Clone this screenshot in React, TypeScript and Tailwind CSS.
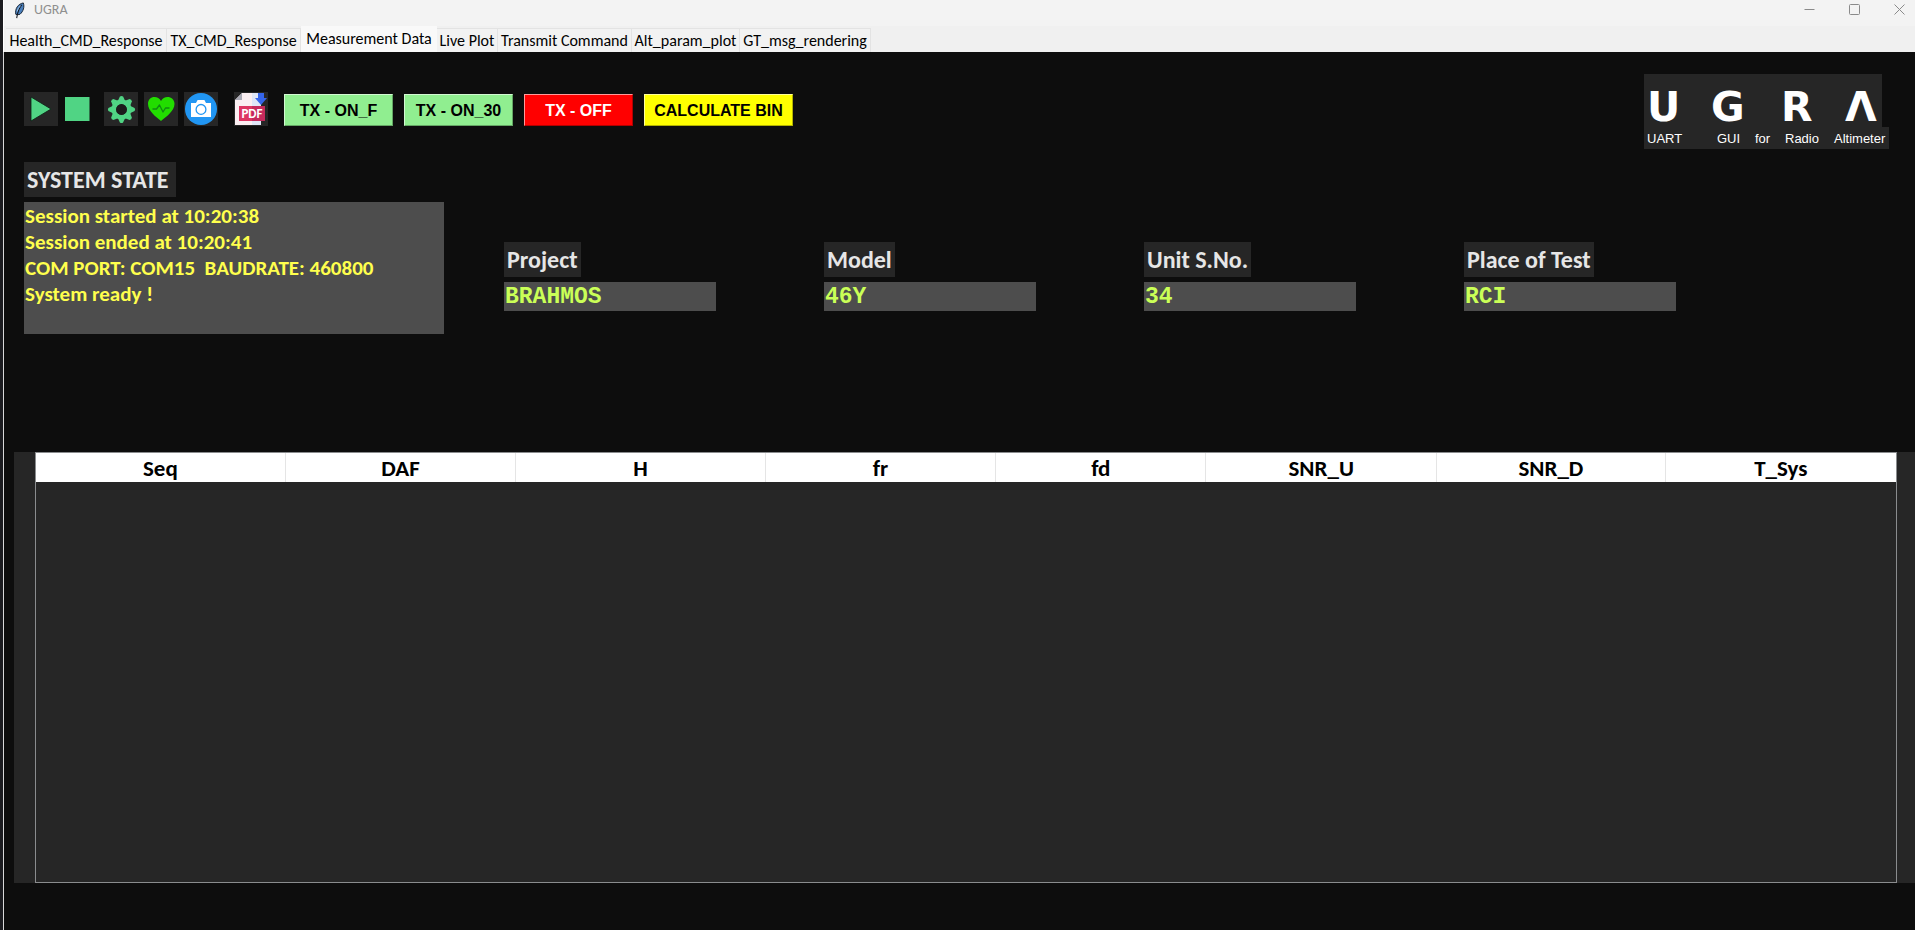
import type { ReactNode } from "react";

const tabs = [
  { label: "Health_CMD_Response", width: "w-[161px]" },
  { label: "TX_CMD_Response", width: "w-[134px]" },
  { label: "Measurement Data", width: "w-[136px]", active: true },
  { label: "Live Plot", width: "w-[61px]" },
  { label: "Transmit Command", width: "w-[134px]" },
  { label: "Alt_param_plot", width: "w-[108px]" },
  { label: "GT_msg_rendering", width: "w-[131px]" },
];

const logLines = [
  "Session started at 10:20:38",
  "Session ended at 10:20:41",
  "COM PORT: COM15  BAUDRATE: 460800",
  "System ready !",
];

const fields = [
  { id: "project", label: "Project", value: "BRAHMOS" },
  { id: "model", label: "Model", value: "46Y" },
  { id: "unit", label: "Unit S.No.", value: "34" },
  { id: "place", label: "Place of Test", value: "RCI" },
];

const columns = [
  { name: "Seq", width: "w-[13.4%]" },
  { name: "DAF", width: "w-[12.4%]" },
  { name: "H", width: "w-[13.4%]" },
  { name: "fr", width: "w-[12.4%]" },
  { name: "fd", width: "w-[11.3%]" },
  { name: "SNR_U", width: "w-[12.4%]" },
  { name: "SNR_D", width: "w-[12.3%]" },
  { name: "T_Sys", width: "w-[12.4%]" },
];

const logo = [
  { glyph: "U", width: "w-[64px]" },
  { glyph: "G", width: "w-[70px]" },
  { glyph: "R", width: "w-[64px]" },
  { glyph: "Λ", width: "w-[34px]" },
];

function IconButton({ label, plain, children }: { label: string; plain?: boolean; children: ReactNode }) {
  return (
    <button
      type="button"
      aria-label={label}
      className={`flex size-[34px] items-center justify-center ${plain ? "" : "bg-[#262626]"}`}
    >
      {children}
    </button>
  );
}

function ActionButton({ className, children }: { className: string; children: ReactNode }) {
  return (
    <button
      type="button"
      className={`h-8 border border-t-white/60 border-l-white/60 border-r-black/30 border-b-black/30 pt-0.5 font-['Liberation_Sans',Arial,sans-serif] text-base leading-6 font-bold whitespace-nowrap ${className}`}
    >
      {children}
    </button>
  );
}

function Gear() {
  const teeth = Array.from({ length: 8 }, (_, i) => i * 45);
  return (
    <svg viewBox="0 0 34 34" className="size-[34px]">
      <g fill="#50d484">
        {teeth.map((a) => (
          <path key={a} d="M13.6 9.5 L15.9 4.4 Q17.5 3.4 19.1 4.4 L21.4 9.5 Z" transform={`rotate(${a} 17.5 17.5)`} />
        ))}
      </g>
      <circle cx="17.5" cy="17.5" r="7.6" fill="none" stroke="#50d484" strokeWidth="4.6" />
      <circle cx="17.5" cy="17.5" r="5.4" fill="#1c1c1c" />
    </svg>
  );
}

export default function App() {
  return (
    <div className="flex min-h-screen flex-col border-l-3 border-[#1b1b1f] bg-[#0d0d0d] font-[Carlito,Calibri,Lato,sans-serif]">
      <header className="flex h-[26px] items-start justify-between border-l border-white bg-[#f3f3f3]">
        <div className="flex h-5 items-center gap-2 pl-2.5">
          <svg viewBox="0 0 12 18" className="h-[17px] w-3">
            <path d="M1.5 13 C0.5 7 4 2 9.5 1 C11 5 9.5 10 6 13 L3.2 13.5 Z" fill="#4a7fbc" stroke="#14202e" strokeWidth="1" />
            <path d="M8 3 C5 6 3.5 10 2.5 17" fill="none" stroke="#10161e" strokeWidth="1.1" />
            <path d="M6.5 4 C4.5 6 3.5 8 3 10" fill="none" stroke="#a9cdf0" strokeWidth="1" />
          </svg>
          <h1 className="text-sm leading-5 text-[#8f8f8f]">UGRA</h1>
        </div>
        <div className="flex gap-[27px] pt-1 pr-[7px]">
          <button type="button" aria-label="Minimize" className="flex w-[18px] justify-center">
            <svg viewBox="0 0 11 11" className="size-[11px]"><path d="M0.5 5.5 H10.5" stroke="#8a8a8a" /></svg>
          </button>
          <button type="button" aria-label="Maximize" className="flex w-[18px] justify-center">
            <svg viewBox="0 0 11 11" className="size-[11px]"><rect x="0.5" y="0.5" width="10" height="10" rx="1" fill="none" stroke="#8a8a8a" /></svg>
          </button>
          <button type="button" aria-label="Close" className="flex w-[18px] justify-center">
            <svg viewBox="0 0 11 11" className="size-[11px]"><path d="M0.5 0.5 L10.5 10.5 M10.5 0.5 L0.5 10.5" stroke="#8a8a8a" /></svg>
          </button>
        </div>
      </header>

      <nav role="tablist" className="flex h-[26px] items-end border-l border-white bg-[#f0f0f0] pl-0.5">
        {tabs.map((t) => (
          <button
            key={t.label}
            type="button"
            role="tab"
            aria-selected={!!t.active}
            className={`text-base leading-5 whitespace-nowrap text-black ${t.width} ${
              t.active ? "h-[26px] bg-[#f9f9f9]" : "h-6 border-t border-r border-[#e3e3e3] bg-[#f2f2f2]"
            }`}
          >
            {t.label}
          </button>
        ))}
      </nav>

      <main className="flex flex-1 flex-col border-l border-[#d8d8d8]">
        <div className="flex items-start justify-between pt-[22px] pr-[26px] pl-5">
          <div className="flex items-end pt-[18px]">
            <IconButton label="Start">
              <svg viewBox="0 0 34 34" className="size-[34px]"><path d="M7 5 L27 17 L7 29 Z" fill="#50d484" stroke="#0b2014" strokeWidth="0.8" /></svg>
            </IconButton>
            <div className="ml-0.5">
              <IconButton label="Stop" plain>
                <svg viewBox="0 0 34 34" className="size-[34px]"><rect x="5" y="5" width="24.5" height="24" fill="#50d484" /></svg>
              </IconButton>
            </div>
            <div className="ml-2.5 flex gap-1.5">
              <IconButton label="Settings"><Gear /></IconButton>
              <IconButton label="Health">
                <svg viewBox="0 0 34 34" className="size-[34px]">
                  <path d="M17 29 C12 25 4 19 4 11.8 C4 7.6 7 5 10.4 5 C13.2 5 15.6 6.4 17 9 C18.4 6.4 20.8 5 23.6 5 C27 5 30.5 7.6 30.5 11.8 C30.5 19 22 25 17 29 Z" fill="#22dd00" />
                  <path d="M8.5 17 H12.5 L15.5 13 L19 20 L21.5 16 H25.5" fill="none" stroke="#0f8a12" strokeWidth="1.3" strokeLinejoin="round" />
                </svg>
              </IconButton>
              <IconButton label="Screenshot">
                <svg viewBox="0 0 34 34" className="size-[34px]">
                  <circle cx="17" cy="17" r="16" fill="#2196f3" />
                  <path d="M7 11 H12 L13.6 8 H20.4 L22 11 H27 V25 H7 Z" fill="#fff" />
                  <circle cx="17" cy="17.4" r="4.9" fill="#fff" stroke="#2196f3" strokeWidth="1.3" />
                </svg>
              </IconButton>
            </div>
            <div className="ml-4">
              <IconButton label="Export PDF">
                <svg viewBox="0 0 34 34" className="size-[34px]">
                  <path d="M8 1 H27 V33 H1 V8 Z" fill="#fbeff2" />
                  <path d="M18 1 H27 V33 H18 Z" fill="#dfe6f7" />
                  <path d="M8 1 V8 H1 Z" fill="#a9a9b4" />
                  <rect x="5" y="14" width="26" height="15" fill="#dd3562" />
                  <path d="M18 14 H31 V29 H18 Z" fill="#c52a5c" />
                  <path d="M24 1 H30 V6 H33 L27 13 L21 6 H24 Z" fill="#3565ea" />
                  <text x="18" y="25.5" textAnchor="middle" fontSize="13" fontWeight="700" fill="#fff">PDF</text>
                </svg>
              </IconButton>
            </div>
            <div className="ml-4 flex gap-[11px]">
              <ActionButton className="w-[109px] bg-[#90ee90] text-black">TX - ON_F</ActionButton>
              <ActionButton className="w-[109px] bg-[#90ee90] text-black">TX - ON_30</ActionButton>
              <ActionButton className="w-[109px] bg-[#ff0000] text-white">TX - OFF</ActionButton>
              <ActionButton className="w-[149px] bg-[#ffff00] text-black">CALCULATE BIN</ActionButton>
            </div>
          </div>

          <div className="w-[245px] text-white">
            <div className="flex h-[53px] w-[238px] items-center bg-[#262626] pt-3 pl-[3px] font-['DejaVu_Sans',sans-serif] text-[41px] leading-10 font-bold">
              {logo.map((l) => (
                <span key={l.glyph} className={l.width}>{l.glyph}</span>
              ))}
            </div>
            <div className="flex h-[22px] items-center bg-[#262626] px-[3px] pt-px font-['Liberation_Sans',Arial,sans-serif] text-[13px]">
              <span className="w-[70px]">UART</span>
              <span className="w-[38px]">GUI</span>
              <span className="w-[30px]">for</span>
              <span className="w-[49px]">Radio</span>
              <span>Altimeter</span>
            </div>
          </div>
        </div>

        <div className="flex items-start pt-[13px] pr-[26px] pl-5">
          <section className="w-[420px] shrink-0">
            <h2 className="flex h-[35px] w-[152px] items-center bg-[#262626] px-[3px] pt-px text-2xl font-bold whitespace-nowrap text-[#e6e6e6]">SYSTEM STATE</h2>
            <div className="mt-[5px] h-[132px] bg-[#4d4d4d] px-px pt-px">
              {logLines.map((l) => (
                <p key={l} className="text-[21px] leading-[26px] font-bold whitespace-pre text-[#ffff4d]">{l}</p>
              ))}
            </div>
          </section>
          <div className="ml-[60px] grid flex-1 grid-cols-[repeat(4,minmax(212px,320px))] pt-20">
            {fields.map((f) => (
              <div key={f.id} className="flex flex-col items-start gap-[5px]">
                <label htmlFor={f.id} className="flex h-[35px] items-center bg-[#262626] px-[3px] pt-px text-2xl font-bold text-[#e6e6e6]">
                  {f.label}
                </label>
                <input
                  id={f.id}
                  defaultValue={f.value}
                  className="h-[29px] w-[212px] bg-[#4d4d4d] px-px font-['Liberation_Mono','Courier_New',monospace] text-[23px] leading-7 font-bold text-[#caff57] outline-none"
                />
              </div>
            ))}
          </div>
        </div>

        <div className="mt-[118px] mb-[47px] ml-2.5 flex flex-1 flex-col bg-[#262626] pr-[18px] pl-[21px]">
          <div className="flex flex-1 flex-col border border-[#8a8c8e]">
            <table className="w-full table-fixed border-collapse bg-white">
              <thead>
                <tr className="h-[29px]">
                  {columns.map((c) => (
                    <th key={c.name} scope="col" className={`border-r border-[#e5e5e5] p-0 text-[23px] leading-7 font-bold text-black last:border-r-0 ${c.width}`}>
                      {c.name}
                    </th>
                  ))}
                </tr>
              </thead>
            </table>
          </div>
        </div>
      </main>
    </div>
  );
}
